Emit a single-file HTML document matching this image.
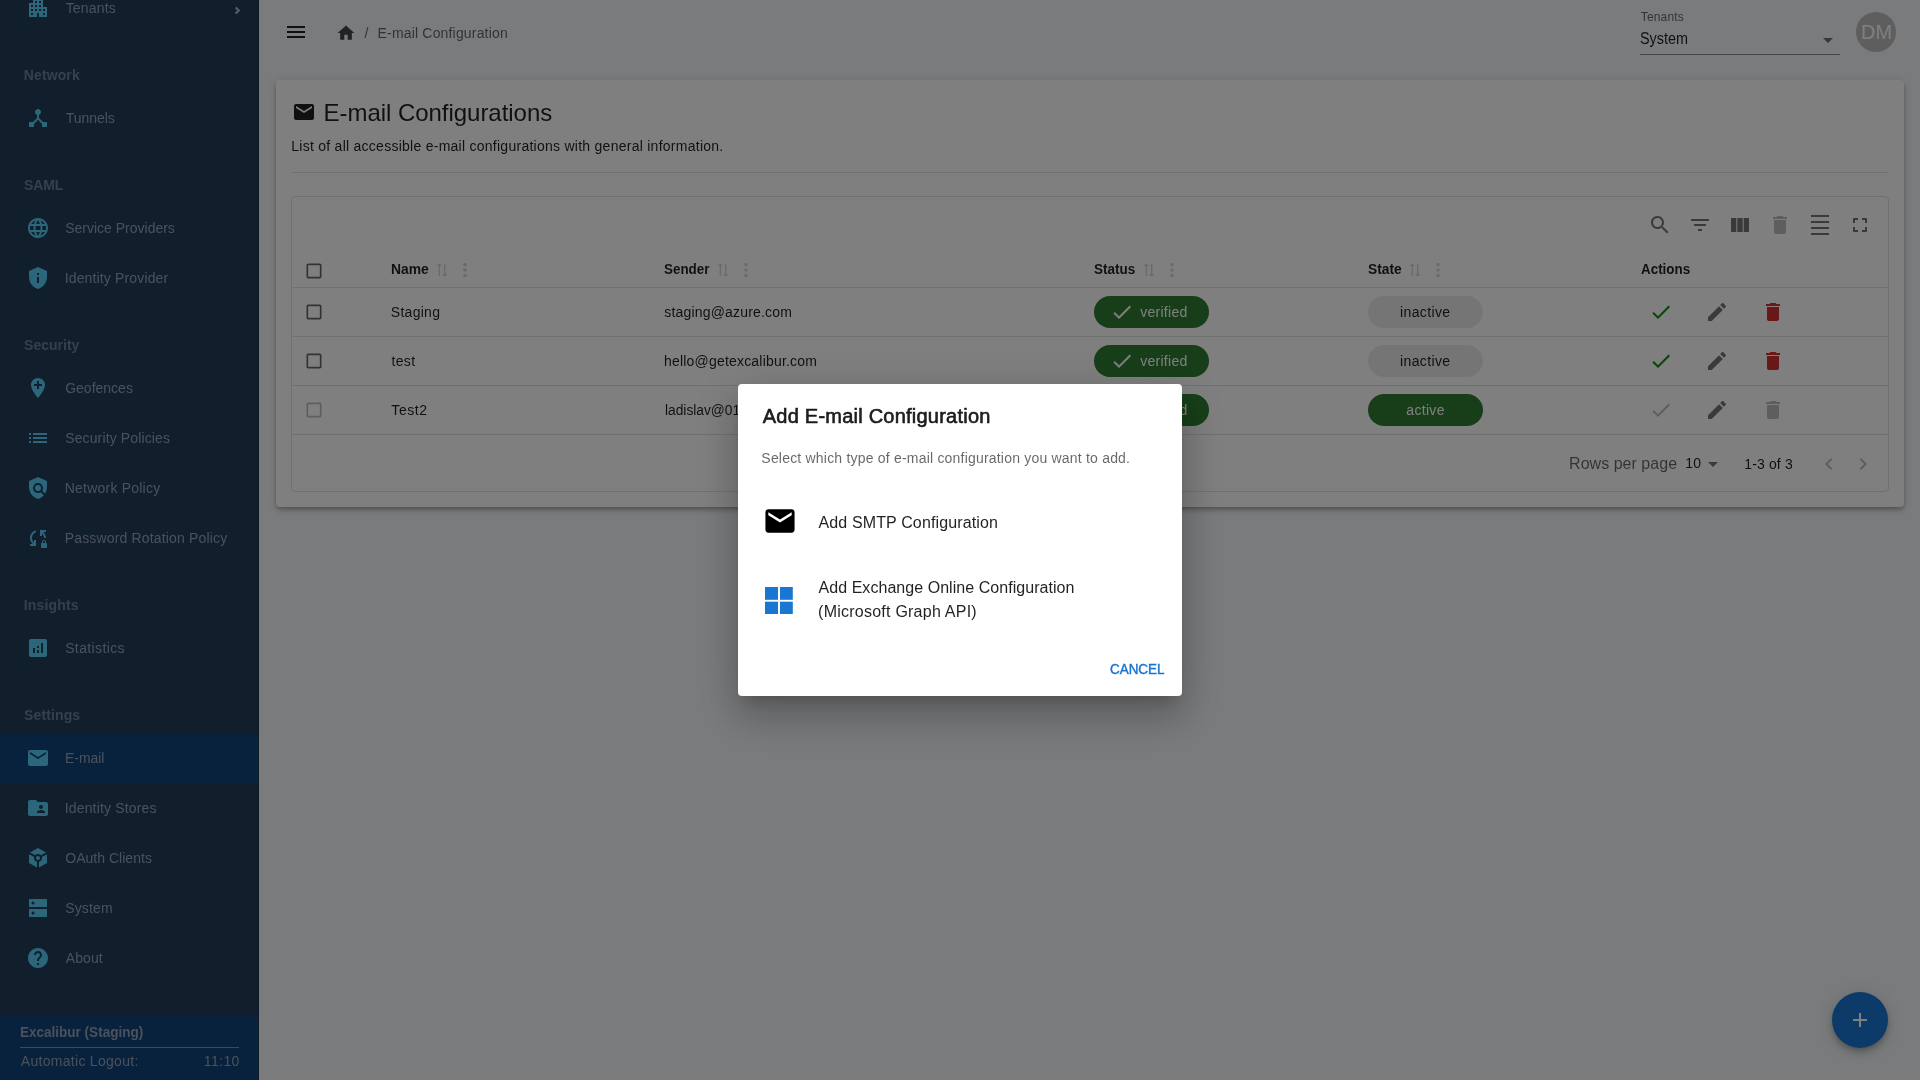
<!DOCTYPE html>
<html lang="en">
<head>
<meta charset="utf-8">
<title>E-mail Configuration</title>
<style>
*{box-sizing:border-box;margin:0;padding:0}
html,body{width:1920px;height:1080px;overflow:hidden}
body{font-family:"Liberation Sans",sans-serif;background:#f4f6fa;color:rgba(0,0,0,.87);position:relative;font-size:14px}
.abs{position:absolute}
.t{position:absolute;white-space:nowrap;line-height:1;transform:translateY(-50%)}
svg{display:block}
.ic{position:absolute;transform:translate(-50%,-50%)}
#root{position:absolute;left:0;top:0;width:1920px;height:1080px;overflow:hidden;will-change:transform}
#side{position:absolute;left:0;top:0;width:259px;height:1080px;background:#223c58;border-right:1px solid rgba(0,0,0,.14)}
#side .sel{position:absolute;left:0;top:733px;width:258px;height:50px;background:#10427a}
#side .si{position:absolute;left:26px;width:24px;height:24px;fill:#56ccf5}
#foot{position:absolute;left:0;top:1015px;width:258px;height:65px;background:#10427a}
#card{position:absolute;left:276px;top:80px;width:1628px;height:427px;background:#fff;border-radius:4px;box-shadow:0 2px 4px -1px rgba(0,0,0,.2),0 4px 5px 0 rgba(0,0,0,.14),0 1px 10px 0 rgba(0,0,0,.12)}
#tbl{position:absolute;left:291px;top:196px;width:1598px;height:296px;border:1px solid #e0e0e0;border-radius:4px;background:#fff}
.hl{position:absolute;left:292px;width:1596px;height:1px;background:#e0e0e0}
.chip{position:absolute;width:115px;height:32px;border-radius:16px}
.chip.g{background:#2e7d32}
.chip.n{background:rgba(0,0,0,.08)}
#back{position:absolute;left:0;top:0;width:1920px;height:1080px;background:rgba(0,0,0,.5)}
#dlg{position:absolute;left:738px;top:384px;width:444px;height:312px;background:#fff;border-radius:4px;box-shadow:0 11px 15px -7px rgba(0,0,0,.2),0 24px 38px 3px rgba(0,0,0,.14),0 9px 46px 8px rgba(0,0,0,.12)}
</style>
</head>
<body>
<div id="root">
<div id="side">
<div class="sel"></div>
<svg class="si" viewBox="0 0 24 24" style="top:-4px"><path d="M17 11V3H7v4H3v14h8v-4h2v4h8V11h-4zM7 19H5v-2h2v2zm0-4H5v-2h2v2zm0-4H5V9h2v2zm4 4H9v-2h2v2zm0-4H9V9h2v2zm0-4H9V5h2v2zm4 8h-2v-2h2v2zm0-4h-2V9h2v2zm0-4h-2V5h2v2zm4 12h-2v-2h2v2zm0-4h-2v-2h2v2z"/></svg>
<div class="t" id="t0" style="left:65.66px;top:8px;font-size:14px;color:#93a4b8;letter-spacing:0.197px;">Tenants</div>
<svg class="si" viewBox="0 0 24 24" style="top:106px"><path d="M17 16l-4-4V8.82C14.16 8.4 15 7.3 15 6c0-1.66-1.34-3-3-3S9 4.34 9 6c0 1.3.84 2.4 2 2.82V12l-4 4H3v5h5v-3.05l4-4.2 4 4.2V21h5v-5h-4z"/></svg>
<div class="t" id="t1" style="left:65.66px;top:118px;font-size:14px;color:#93a4b8;letter-spacing:-0.015px;">Tunnels</div>
<svg class="si" viewBox="0 0 24 24" style="top:216px"><path d="M11.99 2C6.47 2 2 6.48 2 12s4.47 10 9.99 10C17.52 22 22 17.52 22 12S17.52 2 11.99 2zm6.93 6h-2.95c-.32-1.25-.78-2.45-1.38-3.56 1.84.63 3.37 1.91 4.33 3.56zM12 4.04c.83 1.2 1.48 2.53 1.91 3.96h-3.82c.43-1.43 1.08-2.76 1.91-3.96zM4.26 14C4.1 13.36 4 12.69 4 12s.1-1.36.26-2h3.38c-.08.66-.14 1.32-.14 2 0 .68.06 1.34.14 2H4.26zm.82 2h2.95c.32 1.25.78 2.45 1.38 3.56-1.84-.63-3.37-1.9-4.33-3.56zm2.95-8H5.08c.96-1.66 2.49-2.93 4.33-3.56C8.81 5.55 8.35 6.75 8.03 8zM12 19.96c-.83-1.2-1.48-2.53-1.91-3.96h3.82c-.43 1.43-1.08 2.76-1.91 3.96zM14.34 14H9.66c-.09-.66-.16-1.32-.16-2 0-.68.07-1.35.16-2h4.68c.09.65.16 1.32.16 2 0 .68-.07 1.34-.16 2zm.25 5.56c.6-1.11 1.06-2.31 1.38-3.56h2.95c-.96 1.65-2.49 2.93-4.33 3.56zM16.36 14c.08-.66.14-1.32.14-2 0-.68-.06-1.34-.14-2h3.38c.16.64.26 1.31.26 2s-.1 1.36-.26 2h-3.38z"/></svg>
<div class="t" id="t2" style="left:65.17px;top:228px;font-size:14px;color:#93a4b8;">Service Providers</div>
<svg class="si" viewBox="0 0 24 24" style="top:266px"><path d="M12 1 3 5v6c0 5.55 3.84 10.74 9 12 5.16-1.26 9-6.45 9-12V5l-9-4zm-1 6h2v2h-2V7zm0 4h2v6h-2v-6z"/></svg>
<div class="t" id="t3" style="left:64.67px;top:278px;font-size:14px;color:#93a4b8;letter-spacing:0.148px;">Identity Provider</div>
<svg class="si" viewBox="0 0 24 24" style="top:376px"><path d="M12 2C8.14 2 5 5.14 5 9c0 5.25 7 13 7 13s7-7.75 7-13c0-3.860-3.140-7-7-7zm4 8h-3v3h-2v-3H8V8h3V5h2v3h3v2z"/></svg>
<div class="t" id="t4" style="left:65.17px;top:388px;font-size:14px;color:#93a4b8;letter-spacing:0.004px;">Geofences</div>
<svg class="si" viewBox="0 0 24 24" style="top:426px"><path d="M3 13h2v-2H3v2zm0 4h2v-2H3v2zm0-8h2V7H3v2zm4 4h14v-2H7v2zm0 4h14v-2H7v2zM7 7v2h14V7H7z"/></svg>
<div class="t" id="t5" style="left:65.17px;top:438px;font-size:14px;color:#93a4b8;letter-spacing:0.133px;">Security Policies</div>
<svg class="si" viewBox="0 0 24 24" style="top:476px"><path d="M21 5l-9-4-9 4v6c0 5.55 3.84 10.74 9 12 2.3-.56 4.33-1.9 5.88-3.71l-3.12-3.12c-1.94 1.29-4.58 1.07-6.29-.64-1.95-1.95-1.95-5.12 0-7.07 1.95-1.95 5.12-1.95 7.07 0 1.71 1.71 1.92 4.35.64 6.29l2.9 2.9C20.29 15.69 21 13.38 21 11V5z"/><circle cx="12" cy="12" r="3"/></svg>
<div class="t" id="t6" style="left:64.76px;top:488px;font-size:14px;color:#93a4b8;letter-spacing:0.217px;">Network Policy</div>
<svg class="si" viewBox="0 0 24 24" style="top:526px"><path d="M10 4.26v2.09C7.67 7.18 6 9.39 6 12c0 1.77.78 3.34 2 4.44V14h2v6H4v-2h2.73C5.06 16.54 4 14.4 4 12c0-3.73 2.55-6.85 6-7.74zM20 4h-6v6h2V7.56c1.22 1.1 2 2.67 2 4.44h2c0-2.4-1.06-4.54-2.73-6H20V4zm0 13v-1c0-1.1-.9-2-2-2s-2 .9-2 2v1c-.55 0-1 .45-1 1v3c0 .55.45 1 1 1h4c.55 0 1-.45 1-1v-3c0-.55-.45-1-1-1zm-1 0h-2v-1c0-.55.45-1 1-1s1 .45 1 1v1z"/>
</svg>
<div class="t" id="t7" style="left:64.76px;top:538px;font-size:14px;color:#93a4b8;letter-spacing:0.161px;">Password Rotation Policy</div>
<svg class="si" viewBox="0 0 24 24" style="top:636px"><path d="M19 3H5c-1.1 0-2 .9-2 2v14c0 1.1.9 2 2 2h14c1.1 0 2-.9 2-2V5c0-1.1-.9-2-2-2zM9 17H7v-5h2v5zm4 0h-2v-3h2v3zm0-5h-2v-2h2v2zm4 5h-2V7h2v10z"/></svg>
<div class="t" id="t8" style="left:65.17px;top:648px;font-size:14px;color:#93a4b8;letter-spacing:0.377px;">Statistics</div>
<svg class="si" viewBox="0 0 24 24" style="top:746px"><path d="M20 4H4c-1.1 0-1.99.9-1.99 2L2 18c0 1.1.9 2 2 2h16c1.1 0 2-.9 2-2V6c0-1.1-.9-2-2-2zm0 4l-8 5-8-5V6l8 5 8-5v2z"/></svg>
<div class="t" id="t9" style="left:65.07px;top:758px;font-size:14px;color:#93a4b8;transform:translateY(-50%) scaleX(0.9946);transform-origin:0 50%;">E-mail</div>
<svg class="si" viewBox="0 0 24 24" style="top:796px"><path d="M20 6h-8l-2-2H4c-1.1 0-1.99.9-1.99 2L2 18c0 1.1.9 2 2 2h16c1.1 0 2-.9 2-2V8c0-1.1-.9-2-2-2zm-5 3c1.1 0 2 .9 2 2s-.9 2-2 2-2-.9-2-2 .9-2 2-2zm4 8h-8v-1c0-1.33 2.67-2 4-2s4 .67 4 2v1z"/></svg>
<div class="t" id="t10" style="left:64.67px;top:808px;font-size:14px;color:#93a4b8;letter-spacing:0.172px;">Identity Stores</div>
<svg class="si" viewBox="0 0 24 24" style="top:846px"><path d="M13 15.87c1.73-.44 3-2.01 3-3.87 0-.35-.04-.69-.13-1.01L21 8.13V17l-8 4.45v-5.58zM12 2l8.02 4.46-5.12 2.78C14.17 8.48 13.14 8 12 8s-2.17.48-2.9 1.24L3.98 6.46 12 2zM3 8.13l5.13 2.85c-.09.33-.13.67-.13 1.02 0 1.86 1.27 3.43 3 3.87v5.58L3 17V8.13zM10 12c0-1.1.9-2 2-2s2 .9 2 2-.9 2-2 2-2-.9-2-2z"/></svg>
<div class="t" id="t11" style="left:65.23px;top:858px;font-size:14px;color:#93a4b8;letter-spacing:0.025px;">OAuth Clients</div>
<svg class="si" viewBox="0 0 24 24" style="top:896px"><path fill-rule="evenodd" d="M3 3h18v8H3V3zm4 5.5a1.5 1.5 0 1 0 0-3 1.5 1.5 0 0 0 0 3zM3 13h18v8H3v-8zm4 5.500a1.5 1.5 0 1 0 0-3 1.5 1.5 0 0 0 0 3z"/></svg>
<div class="t" id="t12" style="left:65.17px;top:908px;font-size:14px;color:#93a4b8;letter-spacing:0.155px;">System</div>
<svg class="si" viewBox="0 0 24 24" style="top:946px"><path d="M12 2C6.48 2 2 6.48 2 12s4.48 10 10 10 10-4.48 10-10S17.52 2 12 2zm1 17h-2v-2h2v2zm2.070-7.75l-.9.92C13.45 12.9 13 13.5 13 15h-2v-.5c0-1.1.45-2.1 1.17-2.83l1.24-1.26c.37-.36.59-.86.59-1.41 0-1.1-.9-2-2-2s-2 .9-2 2H8c0-2.21 1.79-4 4-4s4 1.790 4 4c0 .88-.36 1.68-.93 2.250z"/></svg>
<div class="t" id="t13" style="left:65.81px;top:958px;font-size:14px;color:#93a4b8;letter-spacing:0.076px;">About</div>
<div class="t" id="t14" style="left:23.73px;top:75px;font-size:14px;color:#6d8098;font-weight:bold;letter-spacing:0.130px;">Network</div>
<div class="t" id="t15" style="left:24.06px;top:185px;font-size:14px;color:#6d8098;font-weight:bold;letter-spacing:-0.140px;">SAML</div>
<div class="t" id="t16" style="left:24.06px;top:345px;font-size:14px;color:#6d8098;font-weight:bold;letter-spacing:0.008px;">Security</div>
<div class="t" id="t17" style="left:23.73px;top:605px;font-size:14px;color:#6d8098;font-weight:bold;letter-spacing:0.178px;">Insights</div>
<div class="t" id="t18" style="left:24.06px;top:715px;font-size:14px;color:#6d8098;font-weight:bold;letter-spacing:0.120px;">Settings</div>
<svg class="abs" style="left:230px;top:4px;width:14px;height:14px" viewBox="0 0 14 14"><path d="M5.7 3.5 L8.8 6.500 L5.7 9.500" fill="none" stroke="#bcbcbc" stroke-width="2.100"/></svg>
<div id="foot"></div>
<div class="t" id="t19" style="left:19.58px;top:1032px;font-size:14px;color:#93a4b8;font-weight:bold;transform:translateY(-50%) scaleX(0.9656);transform-origin:0 50%;">Excalibur (Staging)</div>
<div class="abs" style="left:20px;top:1047px;width:219px;height:1px;background:#8294a8"></div>
<div class="t" id="t20" style="left:20.82px;top:1060.8px;font-size:14px;color:#93a4b8;letter-spacing:0.291px;">Automatic Logout:</div>
<div class="t" id="t21" style="left:203.85px;top:1060.8px;font-size:14px;color:#93a4b8;letter-spacing:0.390px;">11:10</div>
</div>
<svg class="ic" viewBox="0 0 24 24" style="left:296px;top:32px;width:24px;height:24px;fill:rgba(0,0,0,.87);"><path d="M3 18h18v-2H3v2zm0-5h18v-2H3v2zm0-7v2h18V6H3z"/></svg>
<svg class="ic" viewBox="0 0 24 24" style="left:346px;top:32.5px;width:20px;height:20px;fill:rgba(0,0,0,.72);"><path d="M10 20v-6h4v6h5v-8h3L12 3 2 12h3v8z"/></svg>
<div class="t" id="t22" style="left:364.50px;top:32.5px;font-size:14px;color:rgba(0,0,0,.6);">/</div>
<div class="t" id="t23" style="left:377.58px;top:32.5px;font-size:14px;color:rgba(0,0,0,.6);letter-spacing:0.173px;">E-mail Configuration</div>
<div class="t" id="t24" style="left:1640.76px;top:16.8px;font-size:12px;color:rgba(0,0,0,.6);letter-spacing:0.159px;">Tenants</div>
<div class="t" id="t25" style="left:1640.09px;top:38.6px;font-size:16px;color:rgba(0,0,0,.87);transform:translateY(-50%) scaleX(0.8991);transform-origin:0 50%;">System</div>
<div class="abs" style="left:1640px;top:54px;width:200px;height:1px;background:rgba(0,0,0,.42)"></div>
<svg class="ic" viewBox="0 0 24 24" style="left:1828px;top:39.5px;width:24px;height:24px;fill:rgba(0,0,0,.54);"><path d="M7 10l5 5 5-5z"/></svg>
<div class="abs" style="left:1856px;top:12px;width:40px;height:40px;border-radius:50%;background:#bdbdbd"></div>
<div class="t" id="t26" style="left:1861.02px;top:32.2px;font-size:20px;color:#fff;transform:translateY(-50%) scaleX(0.9969);transform-origin:0 50%;">DM</div>
<div id="card"></div>
<svg class="ic" viewBox="0 0 24 24" style="left:304px;top:112px;width:24px;height:24px;fill:rgba(0,0,0,.87);"><path d="M20 4H4c-1.1 0-1.99.9-1.99 2L2 18c0 1.1.9 2 2 2h16c1.1 0 2-.9 2-2V6c0-1.1-.9-2-2-2zm0 4l-8 5-8-5V6l8 5 8-5v2z"/></svg>
<div class="t" id="t27" style="left:323.52px;top:113.1px;font-size:24px;color:rgba(0,0,0,.87);letter-spacing:-0.036px;">E-mail Configurations</div>
<div class="t" id="t28" style="left:291.27px;top:146px;font-size:14px;color:rgba(0,0,0,.87);letter-spacing:0.261px;">List of all accessible e-mail configurations with general information.</div>
<div class="abs" style="left:292px;top:172px;width:1596px;height:1px;background:rgba(0,0,0,.12)"></div>
<div id="tbl"></div>
<svg class="ic" viewBox="0 0 24 24" style="left:1660px;top:225px;width:24px;height:24px;fill:rgba(0,0,0,.54);"><path d="M15.5 14h-.79l-.28-.27C15.41 12.59 16 11.11 16 9.5 16 5.91 13.09 3 9.5 3S3 5.91 3 9.5 5.91 16 9.5 16c1.61 0 3.09-.59 4.23-1.57l.27.28v.79l5 4.99L20.49 19l-4.99-5zm-6 0C7.01 14 5 11.99 5 9.5S7.01 5 9.5 5 14 7.01 14 9.5 11.99 14 9.5 14z"/></svg>
<svg class="ic" viewBox="0 0 24 24" style="left:1700px;top:225px;width:24px;height:24px;fill:rgba(0,0,0,.54);"><path d="M10 18h4v-2h-4v2zM3 6v2h18V6H3zm3 7h12v-2H6v2z"/></svg>
<svg class="ic" viewBox="0 0 24 24" style="left:1740px;top:225px;width:24px;height:24px;fill:rgba(0,0,0,.54);"><path d="M14.67 5v14H9.33V5h5.34zm1 14H21V5h-5.33v14zm-7.34 0V5H3v14h5.33z"/></svg>
<svg class="ic" viewBox="0 0 24 24" style="left:1780px;top:225px;width:24px;height:24px;fill:rgba(0,0,0,.26);"><path d="M6 19c0 1.1.9 2 2 2h8c1.1 0 2-.9 2-2V7H6v12zM19 4h-3.5l-1-1h-5l-1 1H5v2h14V4z"/></svg>
<svg class="ic" viewBox="0 0 24 24" style="left:1820px;top:225px;width:24px;height:24px;fill:rgba(0,0,0,.54);"><path d="M3 2h18v2H3zm0 18h18v2H3zm0-6h18v2H3zm0-6h18v2H3z"/></svg>
<svg class="ic" viewBox="0 0 24 24" style="left:1860px;top:225px;width:24px;height:24px;fill:rgba(0,0,0,.54);"><path d="M7 14H5v5h5v-2H7v-3zm-2-4h2V7h3V5H5v5zm12 7h-3v2h5v-5h-2v3zM14 5v2h3v3h2V5h-5z"/></svg>
<svg class="ic" viewBox="0 0 24 24" style="left:314px;top:271px;width:20px;height:20px;fill:rgba(0,0,0,.6);"><path d="M19 5v14H5V5h14m0-2H5c-1.1 0-2 .9-2 2v14c0 1.1.9 2 2 2h14c1.1 0 2-.9 2-2V5c0-1.1-.9-2-2-2z"/></svg>
<div class="t" id="t29" style="left:390.58px;top:268.8px;font-size:14px;color:rgba(0,0,0,.87);font-weight:bold;transform:translateY(-50%) scaleX(0.9914);transform-origin:0 50%;">Name</div>
<svg class="ic" viewBox="0 0 24 24" style="left:441.8px;top:269.8px;width:16px;height:16px;fill:rgba(0,0,0,.17);transform:translate(-50%,-50%) rotate(-90deg)"><path d="M18 12l4-4-4-4v3H3v2h15zM6 12l-4 4 4 4v-3h15v-2H6z"/></svg>
<svg class="ic" viewBox="0 0 24 24" style="left:464.9px;top:270px;width:22px;height:22px;fill:rgba(0,0,0,.16);"><path d="M12 8c1.1 0 2-.9 2-2s-.9-2-2-2-2 .9-2 2 .9 2 2 2zm0 2c-1.1 0-2 .9-2 2s.9 2 2 2 2-.9 2-2-.9-2-2-2zm0 6c-1.1 0-2 .9-2 2s.9 2 2 2 2-.9 2-2-.9-2-2-2z"/></svg>
<div class="t" id="t30" style="left:664.47px;top:268.8px;font-size:14px;color:rgba(0,0,0,.87);font-weight:bold;transform:translateY(-50%) scaleX(0.9571);transform-origin:0 50%;">Sender</div>
<svg class="ic" viewBox="0 0 24 24" style="left:723.1px;top:269.8px;width:16px;height:16px;fill:rgba(0,0,0,.17);transform:translate(-50%,-50%) rotate(-90deg)"><path d="M18 12l4-4-4-4v3H3v2h15zM6 12l-4 4 4 4v-3h15v-2H6z"/></svg>
<svg class="ic" viewBox="0 0 24 24" style="left:746.2px;top:270px;width:22px;height:22px;fill:rgba(0,0,0,.16);"><path d="M12 8c1.1 0 2-.9 2-2s-.9-2-2-2-2 .9-2 2 .9 2 2 2zm0 2c-1.1 0-2 .9-2 2s.9 2 2 2 2-.9 2-2-.9-2-2-2zm0 6c-1.1 0-2 .9-2 2s.9 2 2 2 2-.9 2-2-.9-2-2-2z"/></svg>
<div class="t" id="t31" style="left:1094.47px;top:268.8px;font-size:14px;color:rgba(0,0,0,.87);font-weight:bold;transform:translateY(-50%) scaleX(0.9623);transform-origin:0 50%;">Status</div>
<svg class="ic" viewBox="0 0 24 24" style="left:1148.6px;top:269.8px;width:16px;height:16px;fill:rgba(0,0,0,.17);transform:translate(-50%,-50%) rotate(-90deg)"><path d="M18 12l4-4-4-4v3H3v2h15zM6 12l-4 4 4 4v-3h15v-2H6z"/></svg>
<svg class="ic" viewBox="0 0 24 24" style="left:1171.7px;top:270px;width:22px;height:22px;fill:rgba(0,0,0,.16);"><path d="M12 8c1.1 0 2-.9 2-2s-.9-2-2-2-2 .9-2 2 .9 2 2 2zm0 2c-1.1 0-2 .9-2 2s.9 2 2 2 2-.9 2-2-.9-2-2-2zm0 6c-1.1 0-2 .9-2 2s.9 2 2 2 2-.9 2-2-.9-2-2-2z"/></svg>
<div class="t" id="t32" style="left:1367.54px;top:268.8px;font-size:14px;color:rgba(0,0,0,.87);font-weight:bold;transform:translateY(-50%) scaleX(0.9854);transform-origin:0 50%;">State</div>
<svg class="ic" viewBox="0 0 24 24" style="left:1414.6px;top:269.8px;width:16px;height:16px;fill:rgba(0,0,0,.17);transform:translate(-50%,-50%) rotate(-90deg)"><path d="M18 12l4-4-4-4v3H3v2h15zM6 12l-4 4 4 4v-3h15v-2H6z"/></svg>
<svg class="ic" viewBox="0 0 24 24" style="left:1437.7px;top:270px;width:22px;height:22px;fill:rgba(0,0,0,.16);"><path d="M12 8c1.1 0 2-.9 2-2s-.9-2-2-2-2 .9-2 2 .9 2 2 2zm0 2c-1.1 0-2 .9-2 2s.9 2 2 2 2-.9 2-2-.9-2-2-2zm0 6c-1.1 0-2 .9-2 2s.9 2 2 2 2-.9 2-2-.9-2-2-2z"/></svg>
<div class="t" id="t33" style="left:1641.09px;top:268.8px;font-size:14px;color:rgba(0,0,0,.87);font-weight:bold;transform:translateY(-50%) scaleX(0.9575);transform-origin:0 50%;">Actions</div>
<div class="hl" style="top:287px"></div>
<div class="hl" style="top:336px"></div>
<div class="hl" style="top:385px"></div>
<div class="hl" style="top:434px"></div>
<svg class="ic" viewBox="0 0 24 24" style="left:314px;top:312px;width:20px;height:20px;fill:rgba(0,0,0,.6);"><path d="M19 5v14H5V5h14m0-2H5c-1.1 0-2 .9-2 2v14c0 1.1.9 2 2 2h14c1.1 0 2-.9 2-2V5c0-1.1-.9-2-2-2z"/></svg>
<div class="t" id="t34" style="left:390.82px;top:312px;font-size:14px;color:rgba(0,0,0,.87);letter-spacing:0.270px;">Staging</div>
<div class="t" id="t35" style="left:664.21px;top:312px;font-size:14px;color:rgba(0,0,0,.87);letter-spacing:0.186px;">staging@azure.com</div>
<div class="chip g" style="left:1094px;top:296px"></div>
<svg class="ic" viewBox="0 0 24 24" style="left:1122px;top:312px;width:24px;height:24px;fill:#fff;"><path d="M9 16.17L4.83 12l-1.42 1.41L9 19 21 7l-1.41-1.41z"/></svg>
<div class="t" id="t36" style="left:1140.28px;top:312px;font-size:14px;color:#fff;letter-spacing:0.260px;">verified</div>
<div class="chip n" style="left:1368px;top:296px"></div>
<div class="t" id="t37" style="left:1400.02px;top:312px;font-size:14px;color:rgba(0,0,0,.87);letter-spacing:0.371px;">inactive</div>
<svg class="ic" viewBox="0 0 24 24" style="left:1661px;top:312.2px;width:24px;height:24px;fill:#0a8a0a;"><path d="M9 16.17L4.83 12l-1.42 1.41L9 19 21 7l-1.41-1.41z"/></svg>
<svg class="ic" viewBox="0 0 24 24" style="left:1717px;top:312px;width:24px;height:24px;fill:rgba(0,0,0,.54);"><path d="M3 17.25V21h3.75L17.81 9.94l-3.75-3.75L3 17.25zM20.71 7.04c.39-.39.39-1.02 0-1.41l-2.34-2.34c-.39-.39-1.02-.39-1.41 0l-1.83 1.83 3.75 3.75 1.83-1.83z"/></svg>
<svg class="ic" viewBox="0 0 24 24" style="left:1773px;top:312px;width:24px;height:24px;fill:#d32f2f;"><path d="M6 19c0 1.1.9 2 2 2h8c1.1 0 2-.9 2-2V7H6v12zM19 4h-3.5l-1-1h-5l-1 1H5v2h14V4z"/></svg>
<svg class="ic" viewBox="0 0 24 24" style="left:314px;top:361px;width:20px;height:20px;fill:rgba(0,0,0,.6);"><path d="M19 5v14H5V5h14m0-2H5c-1.1 0-2 .9-2 2v14c0 1.1.9 2 2 2h14c1.1 0 2-.9 2-2V5c0-1.1-.9-2-2-2z"/></svg>
<div class="t" id="t38" style="left:391.56px;top:361px;font-size:14px;color:rgba(0,0,0,.87);letter-spacing:0.310px;">test</div>
<div class="t" id="t39" style="left:664.00px;top:361px;font-size:14px;color:rgba(0,0,0,.87);letter-spacing:0.194px;">hello@getexcalibur.com</div>
<div class="chip g" style="left:1094px;top:345px"></div>
<svg class="ic" viewBox="0 0 24 24" style="left:1122px;top:361px;width:24px;height:24px;fill:#fff;"><path d="M9 16.17L4.83 12l-1.42 1.41L9 19 21 7l-1.41-1.41z"/></svg>
<div class="t" id="t40" style="left:1140.27px;top:361px;font-size:14px;color:#fff;letter-spacing:0.260px;">verified</div>
<div class="chip n" style="left:1368px;top:345px"></div>
<div class="t" id="t41" style="left:1400.02px;top:361px;font-size:14px;color:rgba(0,0,0,.87);letter-spacing:0.371px;">inactive</div>
<svg class="ic" viewBox="0 0 24 24" style="left:1661px;top:361.2px;width:24px;height:24px;fill:#0a8a0a;"><path d="M9 16.17L4.83 12l-1.42 1.41L9 19 21 7l-1.41-1.41z"/></svg>
<svg class="ic" viewBox="0 0 24 24" style="left:1717px;top:361px;width:24px;height:24px;fill:rgba(0,0,0,.54);"><path d="M3 17.25V21h3.75L17.81 9.94l-3.75-3.75L3 17.25zM20.71 7.04c.39-.39.39-1.02 0-1.41l-2.34-2.34c-.39-.39-1.02-.39-1.41 0l-1.83 1.83 3.75 3.75 1.83-1.83z"/></svg>
<svg class="ic" viewBox="0 0 24 24" style="left:1773px;top:361px;width:24px;height:24px;fill:#d32f2f;"><path d="M6 19c0 1.1.9 2 2 2h8c1.1 0 2-.9 2-2V7H6v12zM19 4h-3.5l-1-1h-5l-1 1H5v2h14V4z"/></svg>
<svg class="ic" viewBox="0 0 24 24" style="left:314px;top:410px;width:20px;height:20px;fill:rgba(0,0,0,.26);"><path d="M19 5v14H5V5h14m0-2H5c-1.1 0-2 .9-2 2v14c0 1.1.9 2 2 2h14c1.1 0 2-.9 2-2V5c0-1.1-.9-2-2-2z"/></svg>
<div class="t" id="t42" style="left:391.35px;top:410px;font-size:14px;color:rgba(0,0,0,.87);letter-spacing:0.544px;">Test2</div>
<div class="t" id="t43" style="left:664.50px;top:410px;font-size:14px;color:rgba(0,0,0,.87);transform:translateY(-50%) scaleX(0.9821);transform-origin:0 50%;">ladislav@01people.com</div>
<div class="chip g" style="left:1094px;top:394px"></div>
<svg class="ic" viewBox="0 0 24 24" style="left:1122px;top:410px;width:24px;height:24px;fill:#fff;"><path d="M9 16.17L4.83 12l-1.42 1.41L9 19 21 7l-1.41-1.41z"/></svg>
<div class="t" id="t44" style="left:1040.12px;top:410px;font-size:14px;color:#fff;letter-spacing:14.595px;">verified</div>
<div class="chip g" style="left:1368px;top:394px"></div>
<div class="t" id="t45" style="left:1406.30px;top:410px;font-size:14px;color:#fff;letter-spacing:0.312px;">active</div>
<svg class="ic" viewBox="0 0 24 24" style="left:1661px;top:410.2px;width:24px;height:24px;fill:rgba(0,0,0,.26);"><path d="M9 16.17L4.83 12l-1.42 1.41L9 19 21 7l-1.41-1.41z"/></svg>
<svg class="ic" viewBox="0 0 24 24" style="left:1717px;top:410px;width:24px;height:24px;fill:rgba(0,0,0,.54);"><path d="M3 17.25V21h3.75L17.81 9.94l-3.75-3.75L3 17.25zM20.71 7.04c.39-.39.39-1.02 0-1.41l-2.34-2.34c-.39-.39-1.02-.39-1.41 0l-1.83 1.83 3.75 3.75 1.83-1.83z"/></svg>
<svg class="ic" viewBox="0 0 24 24" style="left:1773px;top:410px;width:24px;height:24px;fill:rgba(0,0,0,.26);"><path d="M6 19c0 1.1.9 2 2 2h8c1.1 0 2-.9 2-2V7H6v12zM19 4h-3.5l-1-1h-5l-1 1H5v2h14V4z"/></svg>
<div class="t" id="t46" style="left:1569.11px;top:464.3px;font-size:16px;color:rgba(0,0,0,.6);letter-spacing:0.026px;">Rows per page</div>
<div class="t" id="t47" style="left:1685.22px;top:463px;font-size:14px;color:rgba(0,0,0,.87);letter-spacing:0.348px;">10</div>
<svg class="ic" viewBox="0 0 24 24" style="left:1713px;top:463.5px;width:24px;height:24px;fill:rgba(0,0,0,.54);"><path d="M7 10l5 5 5-5z"/></svg>
<div class="t" id="t48" style="left:1744.31px;top:463.5px;font-size:14px;color:rgba(0,0,0,.87);letter-spacing:0.130px;">1-3 of 3</div>
<svg class="ic" viewBox="0 0 24 24" style="left:1829px;top:464px;width:24px;height:24px;fill:rgba(0,0,0,.26);"><path d="M15.41 7.41L14 6l-6 6 6 6 1.41-1.41L10.83 12z"/></svg>
<svg class="ic" viewBox="0 0 24 24" style="left:1863px;top:464px;width:24px;height:24px;fill:rgba(0,0,0,.26);"><path d="M10 6L8.59 7.41 13.17 12l-4.58 4.59L10 18l6-6z"/></svg>
<div class="abs" style="left:1832px;top:992px;width:56px;height:56px;border-radius:50%;background:#1976d2;box-shadow:0 3px 5px -1px rgba(0,0,0,.2),0 6px 10px 0 rgba(0,0,0,.14),0 1px 18px 0 rgba(0,0,0,.12)"></div>
<svg class="ic" viewBox="0 0 24 24" style="left:1860px;top:1020px;width:24px;height:24px;fill:#fff;"><path d="M19 13h-6v6h-2v-6H5v-2h6V5h2v6h6v2z"/></svg>
<div id="back"></div>
<div id="dlg"></div>
<div class="t" id="t49" style="left:762.79px;top:415.6px;font-size:20px;color:rgba(0,0,0,.87);letter-spacing:0.228px;-webkit-text-stroke:.6px rgba(0,0,0,.87);">Add E-mail Configuration</div>
<div class="t" id="t50" style="left:761.35px;top:458px;font-size:14px;color:rgba(0,0,0,.6);letter-spacing:0.201px;">Select which type of e-mail configuration you want to add.</div>
<svg class="ic" viewBox="0 0 24 24" style="left:779.5px;top:521.2px;width:35px;height:35px;fill:#000;"><path d="M20 4H4c-1.1 0-1.99.9-1.99 2L2 18c0 1.1.9 2 2 2h16c1.1 0 2-.9 2-2V6c0-1.1-.9-2-2-2zm0 4l-8 5-8-5V6l8 5 8-5v2z"/></svg>
<div class="t" id="t51" style="left:818.55px;top:522.6px;font-size:16px;color:rgba(0,0,0,.87);letter-spacing:0.124px;">Add SMTP Configuration</div>
<svg class="abs" style="left:765px;top:586.5px;width:27.8px;height:27.3px" viewBox="0 0 27.8 27.3" preserveAspectRatio="none"><g fill="#1976d2"><rect x="0" y="0" width="13" height="12.8"/><rect x="15" y="0" width="12.8" height="12.8"/><rect x="0" y="14.700" width="13" height="12.600"/><rect x="15" y="14.700" width="12.8" height="12.600"/></g></svg>
<div class="t" id="t52" style="left:818.55px;top:588.4px;font-size:16px;color:rgba(0,0,0,.87);letter-spacing:0.045px;">Add Exchange Online Configuration</div>
<div class="t" id="t53" style="left:818.12px;top:612px;font-size:16px;color:rgba(0,0,0,.87);letter-spacing:0.236px;">(Microsoft Graph API)</div>
<div class="t" id="t54" style="left:1110.43px;top:668.9px;font-size:14px;color:#1976d2;transform:translateY(-50%) scaleX(0.9593);transform-origin:0 50%;-webkit-text-stroke:.45px #1976d2;">CANCEL</div>
</div>
</body>
</html>
